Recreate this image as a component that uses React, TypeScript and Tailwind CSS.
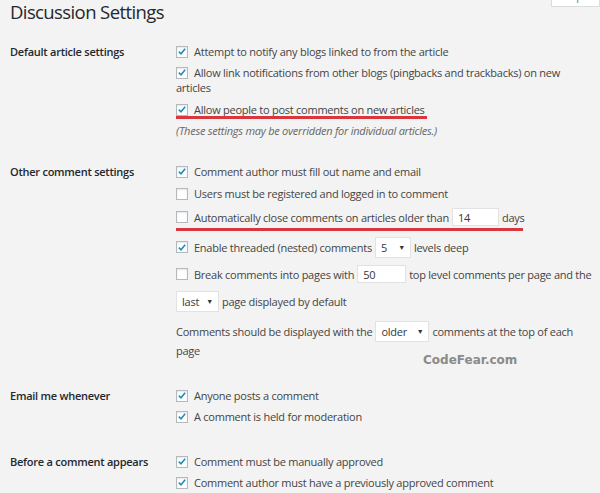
import { ReactNode } from "react";

function Check({ on }: { on?: boolean }) {
  return (
    <span className="relative flex h-[12px] w-[12px] shrink-0 items-center justify-center border border-[#b4b9be] bg-white shadow-[inset_0_1px_2px_rgba(0,0,0,0.1)]">
      {on && (
        <svg viewBox="0 0 12 12" className="h-[11px] w-[11px]">
          <path d="M2.2 6.2 L4.8 8.8 L9.8 2.8" fill="none" stroke="#1e8cbe" strokeWidth="1.9" />
        </svg>
      )}
    </span>
  );
}

function Box({ value, w }: { value: string; w: string }) {
  return (
    <span className={`mx-[3px] inline-flex h-[18px] items-center border border-[#e2e2e2] bg-white px-[5px] text-[#32373c] ${w}`}>
      {value}
    </span>
  );
}

function Select({ value, w }: { value: string; w: string }) {
  return (
    <span className={`mx-[3px] inline-flex h-[21px] items-center justify-between border border-[#e2e2e2] bg-white pl-[5px] pr-[5px] text-[#32373c] ${w}`}>
      <span>{value}</span>
      <span className="text-[7px]">▼</span>
    </span>
  );
}

function Row({ on, mt, children, tall, mark }: { on?: boolean; mt: string; children: ReactNode; tall?: boolean; mark?: string }) {
  return (
    <div className={`relative flex gap-[6px] ${tall ? "h-[22px] items-center" : "items-start"} ${mt}`}>
      <span className={tall ? "flex" : "mt-[1.5px] flex"}>
        <Check on={on} />
      </span>
      <div className="flex items-center whitespace-nowrap">{children}</div>
      {mark && <span className={`absolute left-0 h-[3px] bg-[#d9363e] ${mark}`} />}
    </div>
  );
}

function Section({ label, mt, children }: { label: string; mt: string; children: ReactNode }) {
  return (
    <section className={`flex ${mt}`}>
      <div className="w-[166px] shrink-0 font-semibold text-[#23282d]">{label}</div>
      <div className="w-[418px]">{children}</div>
    </section>
  );
}

export default function App() {
  return (
    <div className="relative h-[493px] w-[600px] overflow-hidden bg-[#f3f3f3] pl-[10px] font-['Open_Sans',sans-serif] text-[11px] leading-[15px] tracking-[-0.25px] text-[#444]">
      <div className="absolute right-0 top-[-15px] h-[22px] w-[49px] border border-[#dcdcdc] bg-white text-center text-[11px] leading-[19px] text-[#72777c]">
        Help ▾
      </div>

      <h1 className="text-[18.5px] font-normal leading-[23px] tracking-[-0.6px] text-[#23282d]">Discussion Settings</h1>

      <Section label="Default article settings" mt="mt-[21px]">
        <Row on mt="">Attempt to notify any blogs linked to from the article</Row>
        <div className="mt-[6px] flex gap-[6px]">
          <span className="mt-[1.5px] flex">
            <Check on />
          </span>
          <span className="-ml-[18px] indent-[18px]">
            Allow link notifications from other blogs (pingbacks and trackbacks) on new articles
          </span>
        </div>
        <Row on mt="mt-[7px]" mark="bottom-[-2px] w-[251px]">
          Allow people to post comments on new articles
        </Row>
        <p className="mt-[6px] italic text-[#666]">
          (These settings may be overridden for individual articles.)
        </p>
      </Section>

      <Section label="Other comment settings" mt="mt-[26px]">
        <Row on mt="">Comment author must fill out name and email</Row>
        <Row mt="mt-[7px]">Users must be registered and logged in to comment</Row>
        <Row mt="mt-[5px]" tall mark="bottom-[-3px] w-[347px]">
          Automatically close comments on articles older than
          <Box value="14" w="w-[47px]" />
          days
        </Row>
        <Row on mt="mt-[8px]" tall>
          Enable threaded (nested) comments
          <Select value="5" w="w-[36px]" />
          levels deep
        </Row>
        <Row mt="mt-[5px]" tall>
          Break comments into pages with
          <Box value="50" w="w-[49px]" />
          top level comments per page and the
        </Row>
        <div className="mt-[5px] flex h-[22px] items-center">
          <Select value="last" w="w-[43px] !ml-0" />
          page displayed by default
        </div>
        <div className="mt-[8px] flex h-[22px] items-center whitespace-nowrap">
          Comments should be displayed with the
          <Select value="older" w="w-[54px]" />
          comments at the top of each
        </div>
        <div className="mt-[1px]">page</div>
      </Section>

      <div className="absolute left-[423px] top-[353px] font-['DejaVu_Sans',sans-serif] text-[12px] font-bold tracking-normal text-[#8a8a8a]">
        CodeFear.com
      </div>

      <Section label="Email me whenever" mt="mt-[30px]">
        <Row on mt="">Anyone posts a comment</Row>
        <Row on mt="mt-[6px]">A comment is held for moderation</Row>
      </Section>

      <Section label="Before a comment appears" mt="mt-[30px]">
        <Row on mt="">Comment must be manually approved</Row>
        <Row on mt="mt-[6px]">Comment author must have a previously approved comment</Row>
      </Section>
    </div>
  );
}
